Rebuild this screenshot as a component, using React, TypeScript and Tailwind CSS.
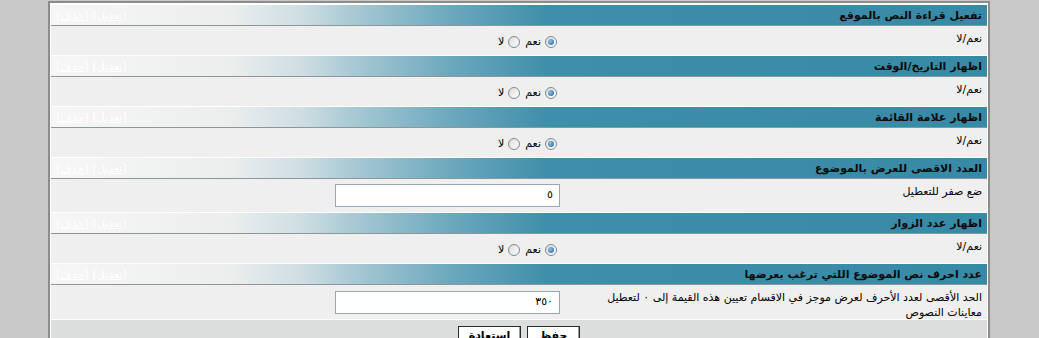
import React from "react";

const font = { fontFamily: '"DejaVu Sans", "Noto Sans", sans-serif' };

function Header({ title }: { title: string }) {
  return (
    <div
      className="h-[21px] border-b border-[#8f9699] flex items-center justify-between px-[5px]"
      style={{
        background:
          "linear-gradient(to right, #f6f6f6 0%, #eceeee 19%, #cddde2 27%, #a9cad5 32%, #6aa7bc 43%, #3f8eaa 53%, #378aa6 100%)",
      }}
    >
      <span className="text-[11px] font-bold text-[#0b0b0b] leading-none">{title}</span>
      <span className="text-[11px] text-white leading-none flex gap-[4px]">
        <a className="underline">[تعديل]</a>
        <a className="underline">[حذف]</a>
      </span>
    </div>
  );
}

function Radio({ checked }: { checked?: boolean }) {
  return (
    <span className="inline-flex w-[12px] h-[12px] rounded-full border border-[#7b8a96] bg-gradient-to-br from-[#dcdcd6] to-[#ffffff] items-center justify-center">
      {checked && (
        <span className="w-[6px] h-[6px] rounded-full bg-[radial-gradient(circle_at_35%_35%,#8fc0e8,#1f5f96)]" />
      )}
    </span>
  );
}

function RadioRow() {
  return (
    <div className="flex h-[29px] bg-[#efefef] mb-[1px]">
      <div className="w-[423px] shrink-0 pt-[5px] pr-[5px] text-[11px] leading-[15px] text-black">نعم/لا</div>
      <div className="flex-1 flex items-center pt-[3px] pr-[7px] text-[11px] text-black">
        <Radio checked />
        <span className="mr-[4px]">نعم</span>
        <span className="mr-[5px] inline-flex"><Radio /></span>
        <span className="mr-[4px]">لا</span>
      </div>
    </div>
  );
}

function InputRow({ label, value, h }: { label: string; value: string; h: string }) {
  return (
    <div className={`flex ${h} bg-[#efefef] mb-[1px]`}>
      <div className="w-[423px] shrink-0 pt-[5px] pr-[5px] pl-[33px] text-[11px] leading-[15px] text-black">{label}</div>
      <div className="flex-1 flex items-center pr-[4px]">
        <div className="w-[225px] h-[23px] border border-[#9aa7b0] bg-white flex items-center px-[6px] text-[11px] text-black">
          {value}
        </div>
      </div>
    </div>
  );
}

export default function App() {
  return (
    <div dir="rtl" className="w-[1039px] h-[338px] overflow-hidden bg-[#c8c8c8] pt-[1px] pr-[49px] pl-[48px]" style={font}>
      <div className="border-t-2 border-x-2 border-[#8c8c8c] bg-white pt-[2px] px-[1px] h-[400px]">
        <Header title="تفعيل قراءة النص بالموقع" />
        <RadioRow />
        <Header title="اظهار التاريخ/الوقت" />
        <RadioRow />
        <Header title="اظهار علامة القائمة" />
        <RadioRow />
        <Header title="العدد الاقصى للعرض بالموضوع" />
        <InputRow label="ضع صفر للتعطيل" value="٥" h="h-[33px]" />
        <Header title="اظهار عدد الزوار" />
        <RadioRow />
        <Header title="عدد احرف نص الموضوع اللتي ترغب بعرضها" />
        <InputRow
          label="الحد الأقصى لعدد الأحرف لعرض موجز في الاقسام تعيين هذه القيمة إلى ٠ لتعطيل معاينات النصوص"
          value="٣٥٠"
          h="h-[34px]"
        />
        <div className="bg-[#dcdddd] h-[80px] flex justify-center items-start gap-[6px] pt-[6px]">
          <button className="w-[53px] h-[22px] border border-[#2a2a2a] bg-white text-[11px] leading-[14px] pt-[2px] font-bold text-black shadow-[inset_-1px_-1px_0_#9a9a9a] flex justify-center items-start" style={font}>
            حفظ
          </button>
          <button className="w-[63px] h-[22px] border border-[#2a2a2a] bg-white text-[11px] leading-[14px] pt-[2px] font-bold text-black shadow-[inset_-1px_-1px_0_#9a9a9a] flex justify-center items-start" style={font}>
            استعادة
          </button>
        </div>
      </div>
    </div>
  );
}
